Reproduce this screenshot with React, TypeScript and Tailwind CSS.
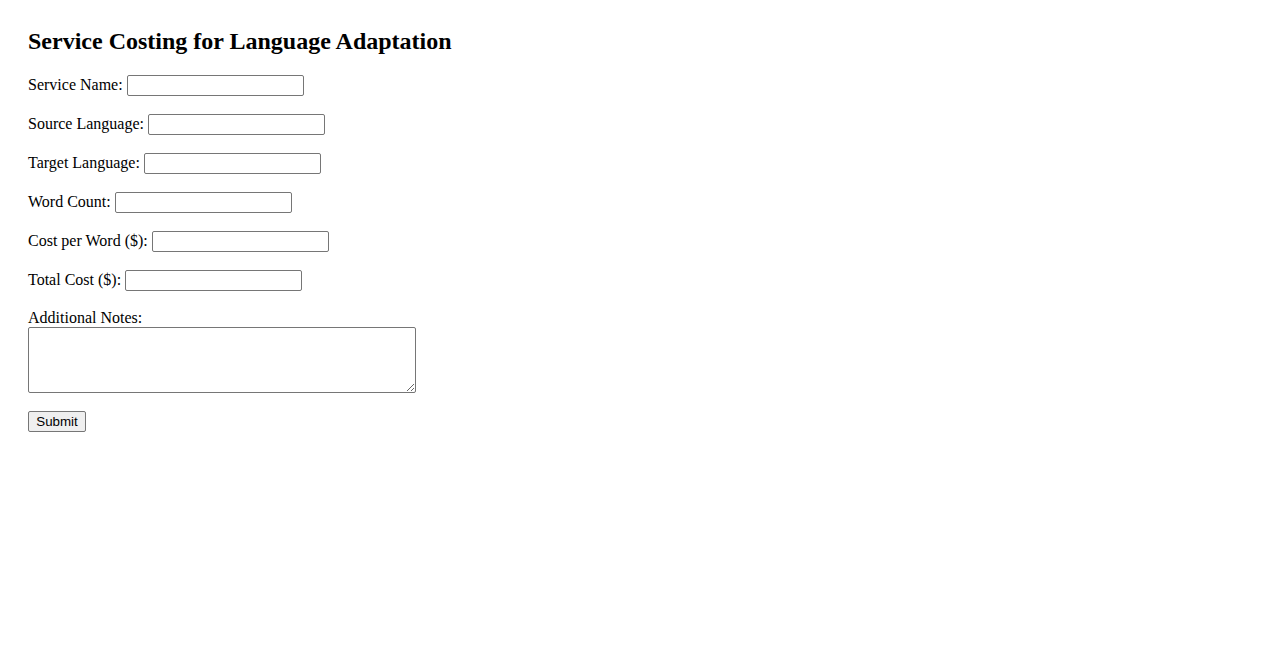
import React from 'react';

const fields = [
  { id: 'serviceName', label: 'Service Name:' },
  { id: 'sourceLanguage', label: 'Source Language:' },
  { id: 'targetLanguage', label: 'Target Language:' },
  { id: 'wordCount', label: 'Word Count:' },
  { id: 'costPerWord', label: 'Cost per Word ($):' },
  { id: 'totalCost', label: 'Total Cost ($):' },
];

export default function App() {
  return (
    <div className="min-h-screen bg-white px-[28px] pt-[27px] font-['Liberation_Serif',serif] text-[16px] text-black">
      <h2 className="mb-[20px] text-[24px] font-bold leading-[28px]">
        Service Costing for Language Adaptation
      </h2>

      <form onSubmit={(e) => e.preventDefault()}>
        {fields.map((f) => (
          <div key={f.id} className="mb-[18px] flex h-[21px] items-center gap-[4px]">
            <label htmlFor={f.id} className="pb-[2px] leading-[18px]">
              {f.label}
            </label>
            <input
              id={f.id}
              type="text"
              className="h-[21px] w-[177px] rounded-[2px] border border-[#767676] bg-white px-[2px] py-[1px] font-['Liberation_Sans',sans-serif] text-[13.33px] outline-none"
            />
          </div>
        ))}

        <div>
          <label htmlFor="notes" className="block leading-[18px]">
            Additional Notes:
          </label>
          <textarea
            id="notes"
            className="block h-[66px] w-[388px] rounded-[2px] border border-[#767676] bg-white px-[2px] py-[2px] font-['Liberation_Mono',monospace] text-[13.33px] outline-none"
          />
        </div>

        <button
          type="submit"
          className="mt-[18px] h-[21px] w-[58px] rounded-[2px] border border-[#767676] bg-[#efefef] font-['Liberation_Sans',sans-serif] text-[13.33px] leading-[15px] text-black"
        >
          Submit
        </button>
      </form>
    </div>
  );
}
